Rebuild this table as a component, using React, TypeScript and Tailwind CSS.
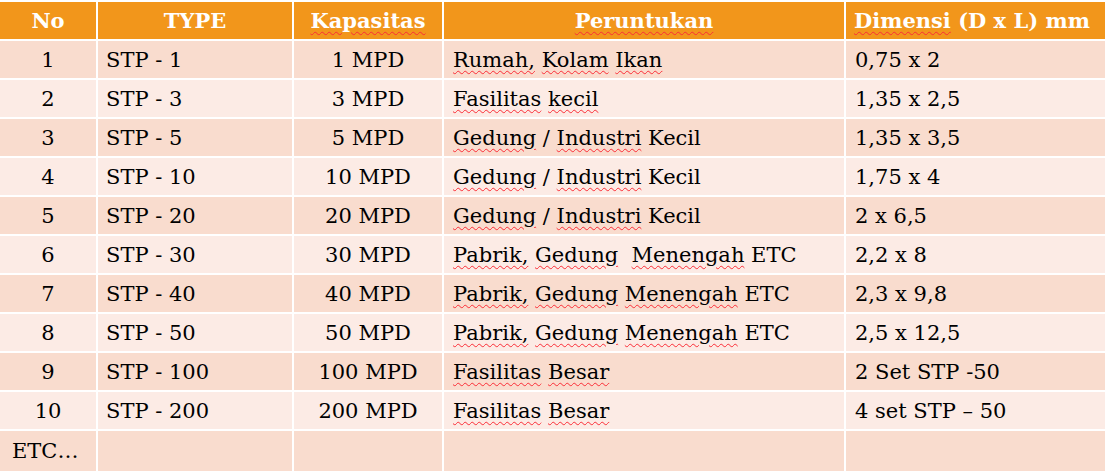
import React from 'react'

type Row = { no: string; type: string; cap: string; use: string[]; dim: string }

// words flagged by the spell checker (red wavy underline)
const flagged = new Set(['Rumah,', 'Kolam', 'Ikan', 'Fasilitas', 'kecil', 'Gedung', 'Industri', 'Pabrik,', 'Menengah', 'Besar'])

const rows: Row[] = [
  { no: '1', type: 'STP - 1', cap: '1 MPD', use: ['Rumah,', 'Kolam', 'Ikan'], dim: '0,75 x 2' },
  { no: '2', type: 'STP - 3', cap: '3 MPD', use: ['Fasilitas', 'kecil'], dim: '1,35 x 2,5' },
  { no: '3', type: 'STP - 5', cap: '5 MPD', use: ['Gedung', '/', 'Industri', 'Kecil'], dim: '1,35 x 3,5' },
  { no: '4', type: 'STP - 10', cap: '10 MPD', use: ['Gedung', '/', 'Industri', 'Kecil'], dim: '1,75 x 4' },
  { no: '5', type: 'STP - 20', cap: '20 MPD', use: ['Gedung', '/', 'Industri', 'Kecil'], dim: '2 x 6,5' },
  { no: '6', type: 'STP - 30', cap: '30 MPD', use: ['Pabrik,', 'Gedung', '', 'Menengah', 'ETC'], dim: '2,2 x 8' },
  { no: '7', type: 'STP - 40', cap: '40 MPD', use: ['Pabrik,', 'Gedung', 'Menengah', 'ETC'], dim: '2,3 x 9,8' },
  { no: '8', type: 'STP - 50', cap: '50 MPD', use: ['Pabrik,', 'Gedung', 'Menengah', 'ETC'], dim: '2,5 x 12,5' },
  { no: '9', type: 'STP - 100', cap: '100 MPD', use: ['Fasilitas', 'Besar'], dim: '2 Set STP -50' },
  { no: '10', type: 'STP - 200', cap: '200 MPD', use: ['Fasilitas', 'Besar'], dim: '4 set STP – 50' },
]

const wavy = 'underline decoration-wavy decoration-red-500 decoration-1 underline-offset-[3px]'

function Words({ words }: { words: string[] }) {
  return (
    <span className="whitespace-pre">
      {words.map((w, i) => (
        <React.Fragment key={i}>
          {i > 0 && ' '}
          {flagged.has(w) ? <span className={wavy}>{w}</span> : w}
        </React.Fragment>
      ))}
    </span>
  )
}

export default function App() {
  const cell = 'flex items-center h-[37px] text-[21px] text-black pt-[2px]'
  const head = 'flex items-center h-[37px] bg-[#f2961b] text-white font-bold text-[21px]'
  return (
    <div className="w-[1108px] h-[471px] bg-white pt-[2px] pr-[3px] overflow-hidden" style={{ fontFamily: '"DejaVu Serif", "Liberation Serif", serif' }}>
      <div className="grid grid-cols-[96px_194px_148px_400px_1fr] gap-[2px] bg-white">
        {/* header */}
        <div className={`${head} justify-center`}>No</div>
        <div className={`${head} justify-center`}>TYPE</div>
        <div className={`${head} justify-center`}><span className={wavy}>Kapasitas</span></div>
        <div className={`${head} justify-center`}><span className={wavy}>Peruntukan</span></div>
        <div className={`${head} pl-[8px] whitespace-nowrap`}><span className={wavy}>Dimensi</span>&nbsp;(D x L) mm</div>

        {rows.map((r, i) => {
          const bg = i % 2 === 0 ? 'bg-[#f9dcce]' : 'bg-[#fcebe5]'
          return (
            <React.Fragment key={r.no}>
              <div className={`${cell} ${bg} justify-center`}>{r.no}</div>
              <div className={`${cell} ${bg} pl-[8px]`}>{r.type}</div>
              <div className={`${cell} ${bg} justify-center`}>{r.cap}</div>
              <div className={`${cell} ${bg} pl-[9px]`}><Words words={r.use} /></div>
              <div className={`${cell} ${bg} pl-[9px]`}>{r.dim}</div>
            </React.Fragment>
          )
        })}

        <div className={`${cell} bg-[#f9dcce] pl-[12px] h-[40px]`}>ETC…</div>
        <div className={`${cell} bg-[#f9dcce] h-[40px]`} />
        <div className={`${cell} bg-[#f9dcce] h-[40px]`} />
        <div className={`${cell} bg-[#f9dcce] h-[40px]`} />
        <div className={`${cell} bg-[#f9dcce] h-[40px]`} />
      </div>
    </div>
  )
}
